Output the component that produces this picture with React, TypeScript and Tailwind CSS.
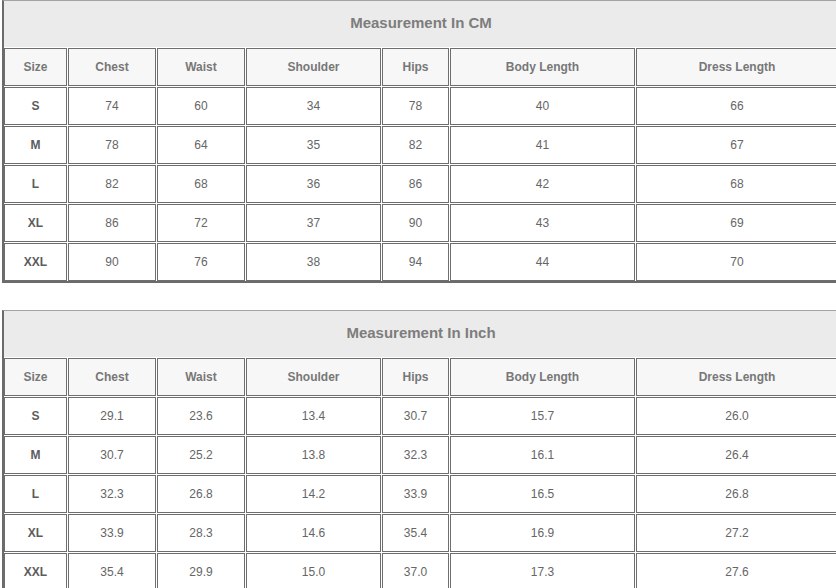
import React from 'react';

const headers = ['Size', 'Chest', 'Waist', 'Shoulder', 'Hips', 'Body Length', 'Dress Length'];

const cmRows = [
  ['S', '74', '60', '34', '78', '40', '66'],
  ['M', '78', '64', '35', '82', '41', '67'],
  ['L', '82', '68', '36', '86', '42', '68'],
  ['XL', '86', '72', '37', '90', '43', '69'],
  ['XXL', '90', '76', '38', '94', '44', '70'],
];

const inchRows = [
  ['S', '29.1', '23.6', '13.4', '30.7', '15.7', '26.0'],
  ['M', '30.7', '25.2', '13.8', '32.3', '16.1', '26.4'],
  ['L', '32.3', '26.8', '14.2', '33.9', '16.5', '26.8'],
  ['XL', '33.9', '28.3', '14.6', '35.4', '16.9', '27.2'],
  ['XXL', '35.4', '29.9', '15.0', '37.0', '17.3', '27.6'],
];

const SizeTable = ({ title, rows }: { title: string; rows: string[][] }) => (
  <div className="w-max border-l-2 border-b-2 border-t border-[#6b6b6b] border-t-[#a3a3a3] bg-white">
    <div className="grid grid-cols-[63px_88px_88px_135px_67px_185px_202px] gap-px">
      {/* title */}
      <div className="col-span-7 h-[46px] pb-[2px] bg-[#ebebeb] flex items-center justify-center text-[15px] font-bold text-[#7d7d7d]">
        {title}
      </div>

      {/* header */}
      {headers.map((h) => (
        <div
          key={h}
          className="h-[38px] border border-[#6e6e6e] bg-[#f7f7f7] flex items-center justify-center text-[12px] font-bold text-[#777]"
        >
          {h}
        </div>
      ))}

      {/* rows */}
      {rows.map((row) =>
        row.map((v, j) => (
          <div
            key={row[0] + j}
            className={`h-[38px] border border-[#6e6e6e] bg-white flex items-center justify-center text-[12px] ${
              j === 0 ? 'font-semibold text-[#5c5c5c]' : 'text-[#666]'
            }`}
          >
            {v}
          </div>
        ))
      )}
    </div>
  </div>
);

export default function App() {
  return (
    <div
      className="w-[836px] h-[588px] overflow-hidden bg-white pl-[2px]"
      style={{ fontFamily: '"Liberation Sans", Arial, sans-serif' }}
    >
      <SizeTable title="Measurement In CM" rows={cmRows} />
      <div className="mt-[27px]">
        <SizeTable title="Measurement In Inch" rows={inchRows} />
      </div>
    </div>
  );
}
